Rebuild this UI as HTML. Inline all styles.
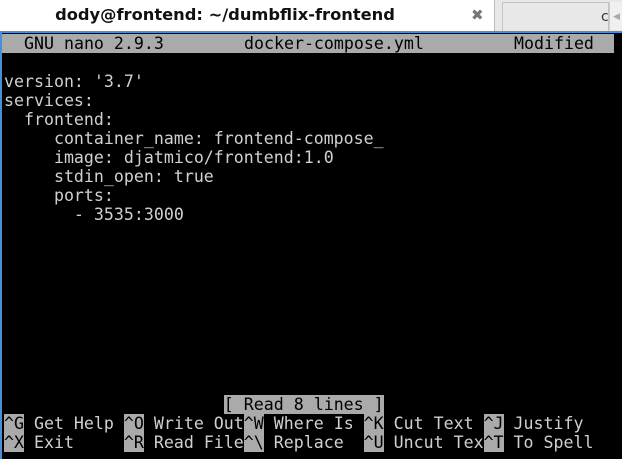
<!DOCTYPE html>
<html><head><style>
html,body{margin:0;padding:0;width:622px;height:459px;overflow:hidden;background:#000}
#tabs{position:absolute;left:0;top:0;width:622px;height:31px;background:#e8e8e8}
#t1{position:absolute;left:0;top:0;width:494px;height:31px;background:#fff;border-right:1px solid #bbb}
#t1 span{position:absolute;left:25px;width:400px;top:5px;text-align:center;font:bold 16.3px "DejaVu Sans","Liberation Sans",sans-serif;color:#111;white-space:nowrap}
#x{position:absolute;left:471px;top:6px;font:bold 15px "DejaVu Sans",sans-serif;color:#777}
#t2{position:absolute;left:502px;top:2px;width:105px;height:28px;background:#e8e8e8;border:1px solid #c4c4c4;border-bottom:none;overflow:hidden}
#t2 span{position:absolute;left:98px;top:6px;font:14px "DejaVu Sans",sans-serif;color:#333}
#arr{position:absolute;left:609px;top:2px;width:13px;height:28px;background:#f0f0f0;border-left:1px solid #ccc;color:#aaa;font:9px sans-serif;line-height:28px;text-align:center}
#blue{position:absolute;left:0;top:31px;width:622px;height:2px;background:#4a8fd6}
#lb{position:absolute;left:0;top:31px;width:2px;height:428px;background:#4a8fd6}
.r{position:absolute;left:4px;height:19px;font:16.6px "DejaVu Sans Mono",monospace;line-height:19px;white-space:pre;color:#d0d0d0}
.i{background:#aaa;color:#000}
#hb{position:absolute;left:2px;top:34px;width:612px;height:19px;background:#aaa}
</style></head><body>
<div id="tabs"><div id="t1"><span>dody@frontend: ~/dumbflix-frontend</span><div id="x">✖</div></div><div id="t2"><span>c</span></div><div id="arr">◀</div></div>
<div id="blue"></div><div id="lb"></div>
<div id="hb"></div>
<div class="r" style="top:34px;left:24px;color:#000">GNU nano 2.9.3</div>
<div class="r" style="top:34px;left:244px;color:#000">docker-compose.yml</div>
<div class="r" style="top:34px;left:514px;color:#000">Modified</div>
<div class="r" style="top:72px">version: '3.7'</div>
<div class="r" style="top:91px">services:</div>
<div class="r" style="top:110px">  frontend:</div>
<div class="r" style="top:129px">     container_name: frontend-compose_</div>
<div class="r" style="top:148px">     image: djatmico/frontend:1.0</div>
<div class="r" style="top:167px">     stdin_open: true</div>
<div class="r" style="top:186px">     ports:</div>
<div class="r" style="top:205px">       - 3535:3000</div>
<div class="r" style="top:395px">                      <span class="i">[ Read 8 lines ]</span></div>
<div class="r" style="top:414px"><span class="i">^G</span> Get Help <span class="i">^O</span> Write Out<span class="i">^W</span> Where Is <span class="i">^K</span> Cut Text <span class="i">^J</span> Justify</div>
<div class="r" style="top:433px"><span class="i">^X</span> Exit     <span class="i">^R</span> Read File<span class="i">^\</span> Replace  <span class="i">^U</span> Uncut Tex<span class="i">^T</span> To Spell</div>
</body></html>
